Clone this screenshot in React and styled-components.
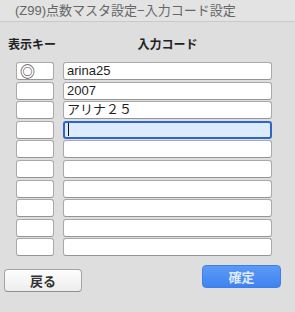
import React from 'react';
import styled, { createGlobalStyle } from 'styled-components';

const GlobalStyle = createGlobalStyle`
  html, body {
    margin: 0;
    padding: 0;
    background: #dcdcdc;
  }
  body {
    font-family: "Liberation Sans", "Noto Sans CJK JP", sans-serif;
  }
`;

//#region Styles
const Window = styled.div`
  width: 295px;
  height: 312px;
  background: #dedede;
  display: flex;
  flex-direction: column;
  overflow: hidden;
`;

const TitleBar = styled.div`
  height: 22px;
  box-sizing: border-box;
  padding: 3px 0 0 15px;
  background: #e3e3e3;
  border-bottom: 1px solid #c9c9c9;
  color: #666;
  font-size: 13px;
  line-height: 16px;
  white-space: nowrap;
`;

const Form = styled.div`
  display: grid;
  grid-template-columns: 38px 209px;
  grid-template-rows: 23.4px;
  grid-auto-rows: 18px;
  column-gap: 9px;
  row-gap: 1.6px;
  padding: 15px 0 0 16px;
`;

const HeaderLabel = styled.div`
  font-size: 12px;
  font-weight: bold;
  color: #222;
  text-align: center;
  white-space: nowrap;
  line-height: 16px;
  margin-left: ${({ $shift }) => $shift || 0}px;
`;

const Field = styled.div`
  height: 18px;
  box-sizing: border-box;
  border: ${({ $focused }) => ($focused ? '2px solid #2f64c8' : '1px solid #a9a9a9')};
  border-bottom-color: ${({ $focused }) => ($focused ? '#2f64c8' : '#959595')};
  border-radius: 3px;
  background: ${({ $focused }) => ($focused ? '#dcebfd' : '#fff')};
  font-size: 13px;
  line-height: 16px;
  color: #1e1e1e;
  padding-left: ${({ $focused }) => ($focused ? 2 : 3)}px;
  white-space: nowrap;
  overflow: hidden;
  display: flex;
  align-items: center;
`;

const Caret = styled.span`
  width: 1px;
  height: 13px;
  background: #111;
  margin-left: 1px;
`;

const Mark = styled.span`
  color: #555;
  font-family: "Noto Sans CJK JP", sans-serif;
  font-size: 15px;
  font-weight: bold;
  line-height: 15px;
`;

const Footer = styled.div`
  display: flex;
  justify-content: space-between;
  align-items: flex-start;
  padding: 8.6px 14px 0 4px;
`;

const BackButton = styled.button`
  margin-top: 4px;
  width: 78px;
  height: 23px;
  border: 1px solid #a4a4a4;
  border-bottom-color: #8e8e8e;
  border-radius: 4px;
  background: linear-gradient(#fefefe, #ededed);
  font-family: inherit;
  font-size: 13px;
  font-weight: bold;
  color: #333;
  padding: 0;
`;

const OkButton = styled.button`
  width: 79px;
  height: 23px;
  border: 1px solid #3d7fe8;
  border-radius: 4px;
  background: linear-gradient(#5b9af6, #3f83f0);
  font-family: inherit;
  font-size: 13px;
  font-weight: bold;
  color: #dfe9fb;
  padding: 0;
`;
//#endregion

const rows = [
  { key: '◎', code: 'arina25' },
  { key: '', code: '2007' },
  { key: '', code: 'アリナ２５' },
  { key: '', code: '', focused: true },
  { key: '', code: '' },
  { key: '', code: '' },
  { key: '', code: '' },
  { key: '', code: '' },
  { key: '', code: '' },
  { key: '', code: '' },
];

const App = () => (
  <>
    <GlobalStyle />
    <Window>
      <TitleBar>(Z99)点数マスタ設定−入力コード設定</TitleBar>
      <Form>
        <HeaderLabel $shift={-8}>表示キー</HeaderLabel>
        <HeaderLabel>入力コード</HeaderLabel>
        {rows.map((row, i) => (
          <React.Fragment key={i}>
            <Field>{row.key && <Mark>{row.key}</Mark>}</Field>
            <Field $focused={row.focused}>
              {row.focused ? <Caret /> : row.code}
            </Field>
          </React.Fragment>
        ))}
      </Form>
      <Footer>
        <BackButton>戻る</BackButton>
        <OkButton>確定</OkButton>
      </Footer>
    </Window>
  </>
);

export default App;
